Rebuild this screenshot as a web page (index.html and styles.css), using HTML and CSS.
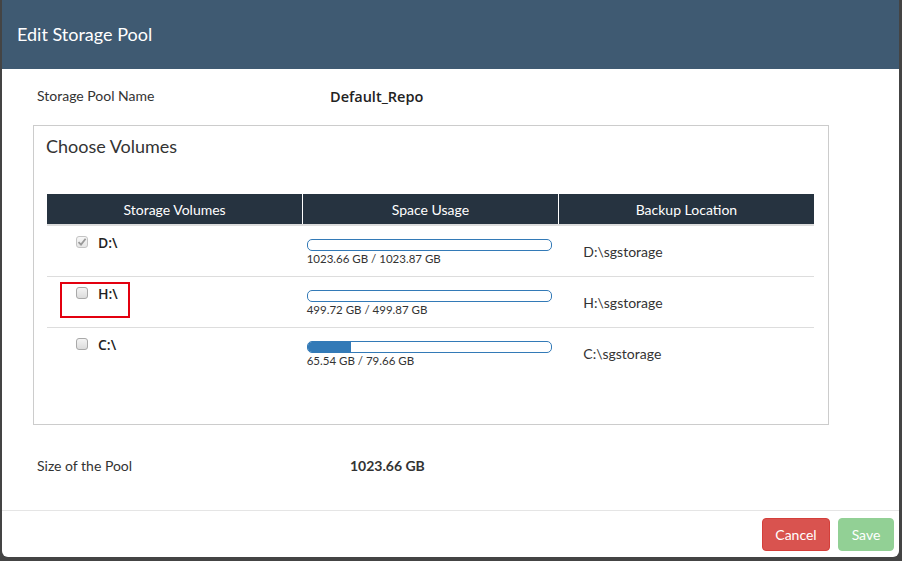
FILE: index.html
```html
<!DOCTYPE html>
<html>
<head>
<meta charset="utf-8">
<link rel="stylesheet" href="styles.css">
</head>
<body>
<div class="modal">
  <div class="modal-header">Edit Storage Pool</div>
  <div class="info-row top">
    <span class="info-label">Storage Pool Name</span>
    <span class="pool-name">Default_Repo</span>
  </div>
  <div class="volumes">
    <div class="volumes-title">Choose Volumes</div>
    <table class="vol-table">
      <thead>
        <tr><th>Storage Volumes</th><th>Space Usage</th><th>Backup Location</th></tr>
      </thead>
      <tbody>
        <tr>
          <td class="c-vol"><div class="vol"><span class="cb checked"><svg width="10" height="10" viewBox="0 0 10 10"><path d="M1.5 5.2 L4 7.6 L8.6 1.8" fill="none" stroke="#9a9a9a" stroke-width="1.8"/></svg></span><span class="drive">D:\</span></div></td>
          <td class="c-use"><div class="bar"><div class="fill" style="width:0%"></div></div><div class="usage">1023.66 GB / 1023.87 GB</div></td>
          <td class="c-loc">D:\sgstorage</td>
        </tr>
        <tr>
          <td class="c-vol"><div class="vol highlight"><span class="cb"></span><span class="drive">H:\</span></div></td>
          <td class="c-use"><div class="bar"><div class="fill" style="width:0%"></div></div><div class="usage">499.72 GB / 499.87 GB</div></td>
          <td class="c-loc">H:\sgstorage</td>
        </tr>
        <tr>
          <td class="c-vol"><div class="vol"><span class="cb"></span><span class="drive">C:\</span></div></td>
          <td class="c-use"><div class="bar"><div class="fill" style="width:18%"></div></div><div class="usage">65.54 GB / 79.66 GB</div></td>
          <td class="c-loc">C:\sgstorage</td>
        </tr>
      </tbody>
    </table>
  </div>
  <div class="info-row bottom">
    <span class="info-label">Size of the Pool</span>
    <span class="pool-size">1023.66 GB</span>
  </div>
  <div class="modal-footer">
    <button class="btn btn-cancel">Cancel</button>
    <button class="btn btn-save">Save</button>
  </div>
</div>
</body>
</html>
```
FILE: styles.css
```css
html, body {
  margin: 0;
  padding: 0;
}
body {
  background: #444;
  width: 902px;
  height: 561px;
  overflow: hidden;
  font-family: Lato, "Liberation Sans", sans-serif;
  color: #333;
}
.modal {
  margin-left: 2px;
  width: 897px;
  height: 557px;
  background: #fff;
  border-radius: 0 0 6px 6px;
  display: flex;
  flex-direction: column;
}
.modal-header {
  height: 69px;
  background: #3f5a72;
  color: #fff;
  font-size: 18px;
  display: flex;
  align-items: center;
  padding-left: 15px;
  padding-bottom: 1px;
  box-sizing: border-box;
}
.info-row {
  display: flex;
  align-items: center;
  padding-left: 35px;
  font-size: 14px;
}
.info-row.top {
  height: 56px;
  padding-bottom: 3px;
  box-sizing: border-box;
}
.info-row.bottom {
  height: 85px;
  padding-bottom: 4px;
  box-sizing: border-box;
}
.info-label {
  width: 293px;
}
.pool-name {
  font-family: "Open Sans", sans-serif;
  font-weight: 600;
  font-size: 14.5px;
  color: #222;
  padding-top: 2px;
}
.pool-size {
  margin-left: 20px;
  font-weight: 700;
  font-size: 14px;
  color: #333;
}
.volumes {
  margin-left: 31px;
  width: 768px;
  height: 298px;
  border: 1px solid #ccc;
  padding: 0 13px;
}
.volumes-title {
  font-size: 18px;
  height: 42px;
  padding-top: 9px;
  box-sizing: border-box;
  color: #333;
  margin-left: -1px;
}
.vol-table {
  margin-top: 26px;
  width: 767px;
  border-collapse: collapse;
  table-layout: fixed;
}
.vol-table th {
  background: #263340;
  color: #fff;
  font-weight: 400;
  font-size: 14px;
  height: 30px;
  padding: 0;
  border-left: 1px solid #fff;
  border-bottom: 2px solid #ddd;
}
.vol-table th:first-child {
  border-left: none;
}
.vol-table td {
  height: 50px;
  padding: 0;
  border-bottom: 1px solid #ddd;
  vertical-align: top;
}
.vol-table tr:last-child td {
  border-bottom: none;
}
.vol {
  display: flex;
  margin-top: 5px;
  margin-left: 13px;
  padding: 3px 0 0 14px;
  width: 70px;
  height: 36px;
  align-items: flex-start;
  box-sizing: border-box;
  border: 2px solid transparent;
}
.vol.highlight {
  border-color: #e3000f;
}
.cb {
  width: 10px;
  height: 10px;
  border: 1px solid #a9a9a9;
  border-radius: 3px;
  background: linear-gradient(#f4f4f4, #dcdcdc);
  display: flex;
  align-items: center;
  justify-content: center;
  flex: none;
}
.cb.checked {
  border-color: #c4c4c4;
  background: linear-gradient(#f7f7f7, #e6e6e6);
}
.drive {
  font-family: "Open Sans", "Liberation Sans", sans-serif;
  font-weight: 600;
  font-size: 14px;
  color: #222;
  margin-left: 10px;
  line-height: 12px;
  margin-top: 1px;
}
.c-use {
  padding-left: 4px !important;
}
.bar {
  margin-top: 13px;
  width: 243px;
  height: 10px;
  border: 1px solid #337ab7;
  border-radius: 5px;
  overflow: hidden;
  background: #fff;
}
.fill {
  height: 100%;
  background: #337ab7;
}
.usage {
  font-size: 11.5px;
  margin-top: 1px;
  color: #333;
}
.c-loc {
  vertical-align: middle !important;
  padding-left: 25px !important;
  font-size: 14px;
  color: #333;
}
.modal-footer {
  border-top: 1px solid #e5e5e5;
  flex: 1;
  display: flex;
  justify-content: flex-end;
  align-items: flex-start;
  padding: 7px 5px 0 0;
  gap: 8px;
}
.btn {
  height: 33px;
  border: 1px solid transparent;
  border-radius: 4px;
  color: #fff;
  font-family: Lato, sans-serif;
  font-size: 14px;
  padding: 0 12px;
}
.btn-cancel {
  background: #d9534f;
  border-color: #d43f3a;
  width: 68px;
}
.btn-save {
  background: #92d095;
  border-color: #92d095;
  width: 56px;
}
```
